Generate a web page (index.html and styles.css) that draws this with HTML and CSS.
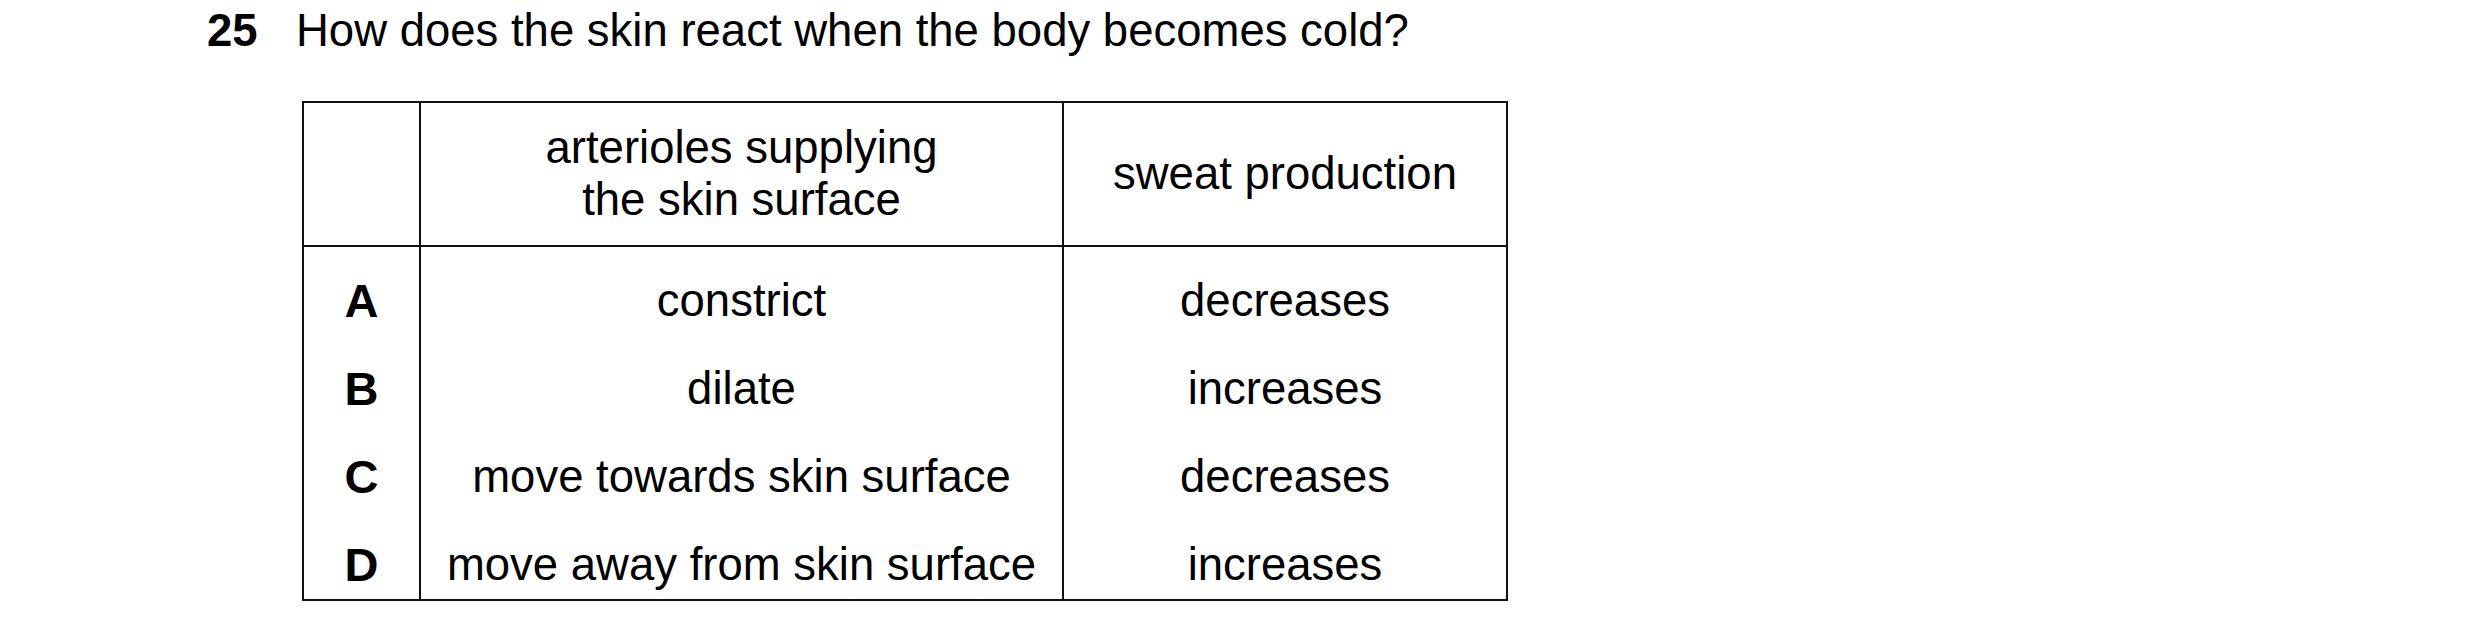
FILE: index.html
```html
<!DOCTYPE html>
<html lang="en">
<head>
<meta charset="utf-8">
<title>Question 25</title>
<link rel="stylesheet" href="styles.css">
</head>
<body>
<div class="question">
  <div class="qnum">25</div>
  <div class="qbody">
    <p class="stem">How does the skin react when the body becomes cold?</p>
    <table class="options">
      <colgroup>
        <col class="c-letter">
        <col class="c-art">
        <col class="c-sweat">
      </colgroup>
      <thead>
        <tr>
          <th></th>
          <th>arterioles supplying<br>the skin surface</th>
          <th>sweat production</th>
        </tr>
      </thead>
      <tbody>
        <tr><td class="letter">A</td><td>constrict</td><td>decreases</td></tr>
        <tr><td class="letter">B</td><td>dilate</td><td>increases</td></tr>
        <tr><td class="letter">C</td><td>move towards skin surface</td><td>decreases</td></tr>
        <tr><td class="letter">D</td><td>move away from skin surface</td><td>increases</td></tr>
      </tbody>
    </table>
  </div>
</div>
</body>
</html>
```
FILE: styles.css
```css
html, body {
  margin: 0;
  padding: 0;
  background: #ffffff;
}
body {
  font-family: "Liberation Sans", Arial, sans-serif;
  font-size: 45.5px;
  line-height: 52px;
  color: #000;
}
.question {
  display: flex;
  padding-left: 207px;
  padding-top: 5px;
}
.qnum {
  width: 89px;
  font-weight: bold;
}
.qbody {
  display: flex;
  flex-direction: column;
}
.stem {
  margin: 0 0 44px 0;
}
.options {
  margin-left: 6px;
  border-collapse: collapse;
  table-layout: fixed;
  width: 1204px;
}
.c-letter { width: 117px; }
.c-art { width: 643px; }
.c-sweat { width: 444px; }
.options th,
.options td {
  border-left: 2px solid #111;
  border-right: 2px solid #111;
  text-align: center;
  padding: 0;
  font-weight: normal;
}
.options thead th {
  border-top: 2px solid #111;
  border-bottom: 2px solid #111;
  padding: 19px 0;
}
.options tbody td {
  padding: 28px 0 8px 0;
}
.options tbody tr:last-child td {
  border-bottom: 2px solid #111;
}
.options td.letter {
  font-weight: bold;
  font-size: 47px;
}
```
